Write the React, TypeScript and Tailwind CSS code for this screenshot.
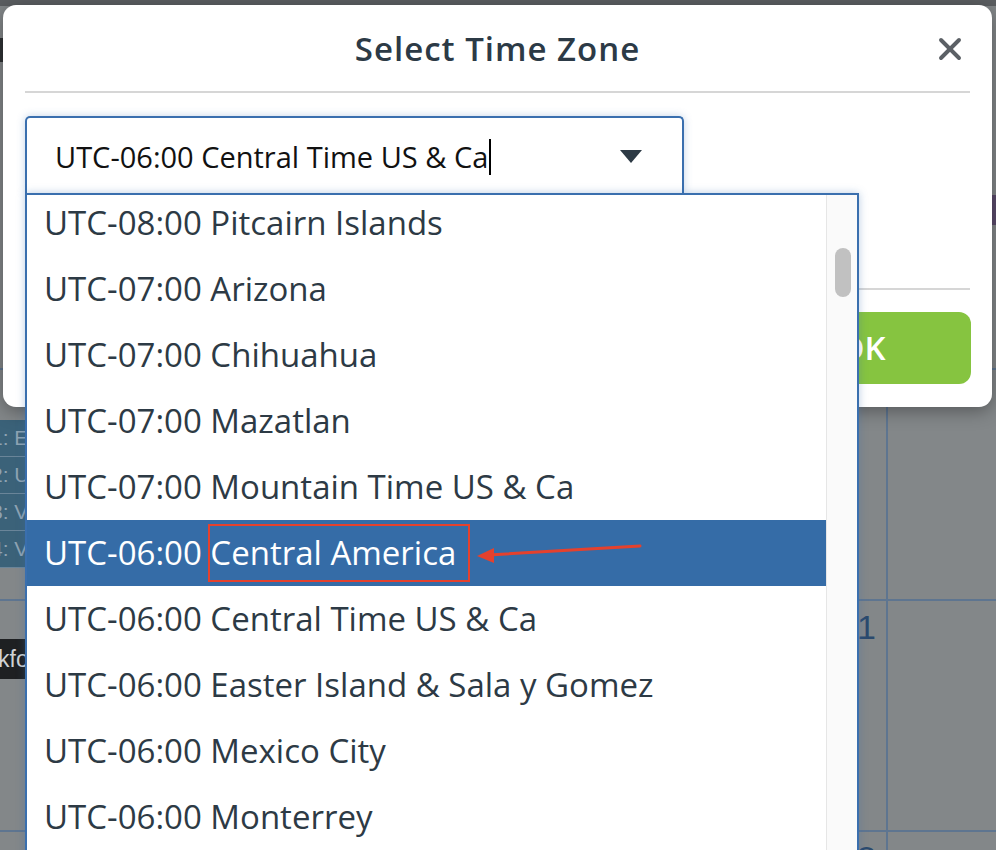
import { X } from 'lucide-react';

const zones = [
  'UTC-08:00 Pitcairn Islands',
  'UTC-07:00 Arizona',
  'UTC-07:00 Chihuahua',
  'UTC-07:00 Mazatlan',
  'UTC-07:00 Mountain Time US & Ca',
  'UTC-06:00 Central America',
  'UTC-06:00 Central Time US & Ca',
  'UTC-06:00 Easter Island & Sala y Gomez',
  'UTC-06:00 Mexico City',
  'UTC-06:00 Monterrey',
  'UTC-06:00 Saskatchewan',
];

const events = ['1: E', '2: U', '3: V', '4: V'];

function Backdrop() {
  return (
    <div className="absolute inset-0 flex flex-col bg-[#838789] font-['Liberation_Sans',Arial,sans-serif]">
      <div className="h-[368px] shrink-0 flex flex-col">
        <div className="h-[6px] bg-[#5b5e61]" />
        <div className="flex-1 flex justify-between">
          <div className="w-[3px] flex flex-col pt-[32px]">
            <div className="h-[24px] bg-[#2f3235]" />
          </div>
          <div className="w-[4px] flex flex-col pt-[189px]">
            <div className="h-[30px] bg-[#5b4b6b]" />
          </div>
        </div>
      </div>

      {/* week 1 */}
      <div className="h-[231px] shrink-0 border-t-2 border-[#5e7590] grid grid-cols-[888px_1fr]">
        <div className="border-r-2 border-[#5e7590] flex flex-col">
          <div className="h-[50px] flex justify-end pr-[10px] pt-[8px] text-[34px] leading-[34px] text-[#2b4a6e]">4</div>
          <div className="flex flex-col">
            {events.map((e) => (
              <div
                key={e}
                className="h-[37px] w-[60px] border-b border-[#6a8599] bg-[#3b6279] text-[#8ea3b3] text-[21px] leading-[36px] -ml-[9px] whitespace-nowrap overflow-hidden"
              >
                {e}
              </div>
            ))}
          </div>
        </div>
        <div />
      </div>

      {/* week 2 */}
      <div className="h-[231px] shrink-0 border-t-2 border-[#5e7590] grid grid-cols-[888px_1fr]">
        <div className="border-r-2 border-[#5e7590] flex flex-col">
          <div className="h-[38px] flex justify-end pr-[10px] pt-[9px] text-[34px] leading-[34px] text-[#2b4a6e]">11</div>
          <div className="h-[40px] w-[60px] bg-[#1e2022] text-[#cfd2d4] text-[23px] leading-[40px] -ml-[2px] overflow-hidden">kfo</div>
        </div>
        <div />
      </div>

      {/* week 3 */}
      <div className="flex-1 border-t-2 border-[#5e7590] grid grid-cols-[888px_1fr]">
        <div className="border-r-2 border-[#5e7590] flex justify-end pr-[10px] pt-[9px] text-[34px] leading-[34px] text-[#2b4a6e]">18</div>
        <div />
      </div>
    </div>
  );
}

function ZoneList() {
  return (
    <div className="absolute -left-[2px] top-full w-[834px] h-[680px] border-2 border-[#3a6fae] bg-white shadow-[0_0_8px_rgba(58,111,174,0.35)] flex overflow-hidden">
      <div className="flex-1 overflow-hidden">
        <div className="-mt-[5px] flex flex-col">
          {zones.map((z, i) => {
            const active = i === 5;
            return (
              <div
                key={z}
                className={`relative h-[66px] shrink-0 flex items-center pl-[17px] text-[33px] whitespace-nowrap ${
                  active ? 'bg-[#356ca7] text-white' : 'text-[#2d3a45]'
                }`}
              >
                {z}
                {active && (
                  <>
                    <div className="absolute left-[181px] top-[4px] w-[262px] h-[58px] border-2 border-[#e5412d]" />
                    <svg className="absolute inset-0 pointer-events-none" width="799" height="66" viewBox="0 0 799 66">
                      <line x1="613" y1="26" x2="462" y2="35" stroke="#e5412d" strokeWidth="3" strokeLinecap="round" />
                      <polygon points="450,36 467,28 467,43" fill="#e5412d" />
                    </svg>
                  </>
                )}
              </div>
            );
          })}
        </div>
      </div>
      <div className="w-[31px] shrink-0 border-l border-[#e6e6e6] bg-[#fafafa] pl-[8px] pt-[53px]">
        <div className="w-[16px] h-[49px] rounded-full bg-[#c1c1c1]" />
      </div>
    </div>
  );
}

export default function App() {
  return (
    <div className="relative w-[996px] h-[850px] overflow-hidden font-['Open_Sans',sans-serif]">
      <Backdrop />

      <div className="absolute left-[3px] top-[5px] w-[989px] h-[402px] bg-white rounded-[13px] shadow-[0_4px_18px_rgba(0,0,0,0.35)] flex flex-col">
        <div className="h-[86px] shrink-0 grid grid-cols-[1fr_auto_1fr] items-center">
          <div />
          <h2 className="text-[33px] font-semibold text-[#2c3a46] tracking-[1px] pt-[2px]">Select Time Zone</h2>
          <div className="flex justify-end pr-[24px] pt-[2px]">
            <X className="w-[36px] h-[36px] text-[#5b6065]" strokeWidth={2.6} />
          </div>
        </div>
        <div className="mx-[22px] h-[2px] bg-[#d6d6d6]" />

        <div className="flex-1 pt-[23px] pl-[22px]">
          <div className="relative w-[659px] h-[77px] border-2 border-b-0 border-[#3a6fae] rounded-t-[5px] shadow-[0_0_8px_rgba(58,111,174,0.3)] flex items-center justify-between pl-[28px] pr-[40px] pt-[2px]">
            <div className="flex items-center text-[29px] text-[#111] whitespace-nowrap">
              UTC-06:00 Central Time US &amp; Ca
              <span className="inline-block w-[2px] h-[36px] bg-black ml-[1px]" />
            </div>
            <svg width="22" height="13" viewBox="0 0 22 13">
              <polygon points="0,0 22,0 11,13" fill="#2d3a45" />
            </svg>
            <ZoneList />
          </div>
        </div>

        <div className="mx-[22px] h-[2px] bg-[#d6d6d6]" />
        <div className="flex justify-end pr-[21px] pt-[22px] pb-[23px]">
          <button className="w-[218px] h-[72px] rounded-[12px] bg-[#86c440] text-white text-[33px] font-semibold">OK</button>
        </div>
      </div>
    </div>
  );
}
